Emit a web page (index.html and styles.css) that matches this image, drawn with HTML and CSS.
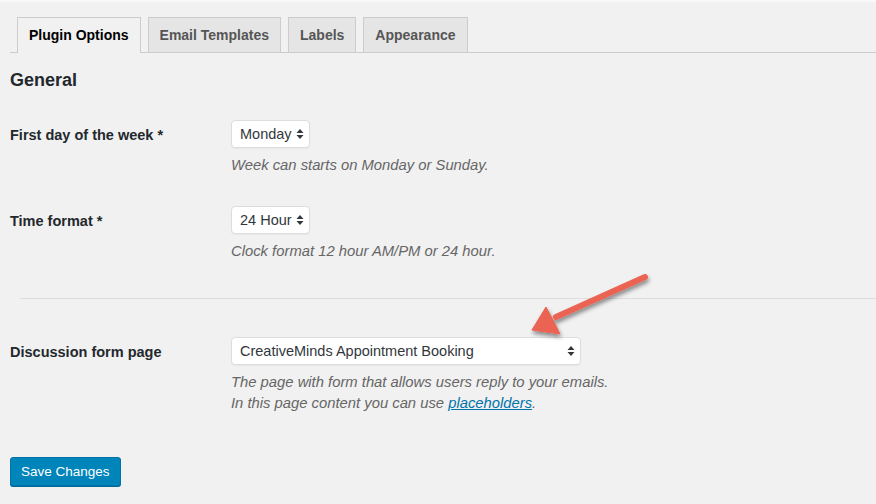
FILE: index.html
```html
<!DOCTYPE html>
<html lang="en">

<head>
    <meta charset="UTF-8">
    <title>Plugin Options</title>
    <link rel="stylesheet" href="styles.css">
</head>

<body>
    <div class="wrap">
        <!-- tabs -->
        <nav class="tabs">
            <a class="tab tab_active" href="#">Plugin Options</a>
            <a class="tab" href="#">Email Templates</a>
            <a class="tab" href="#">Labels</a>
            <a class="tab" href="#">Appearance</a>
        </nav>

        <h2 class="title">General</h2>

        <div class="row row_first">
            <div class="label">First day of the week *</div>
            <div class="field">
                <span class="select">Monday
                    <svg class="arrows" width="8" height="12" viewBox="0 0 8 12"><path d="M4 1 L7.5 5 H0.5 Z M4 11 L0.5 7 H7.5 Z" fill="#32373c"/></svg>
                </span>
                <p class="desc">Week can starts on Monday or Sunday.</p>
            </div>
        </div>

        <div class="row">
            <div class="label">Time format *</div>
            <div class="field">
                <span class="select">24 Hour
                    <svg class="arrows" width="8" height="12" viewBox="0 0 8 12"><path d="M4 1 L7.5 5 H0.5 Z M4 11 L0.5 7 H7.5 Z" fill="#32373c"/></svg>
                </span>
                <p class="desc">Clock format 12 hour AM/PM or 24 hour.</p>
            </div>
        </div>

        <hr class="sep">

        <div class="row row_after_sep">
            <div class="label">Discussion form page</div>
            <div class="field">
                <span class="select select_wide">CreativeMinds Appointment Booking
                    <svg class="arrows" width="8" height="12" viewBox="0 0 8 12"><path d="M4 1 L7.5 5 H0.5 Z M4 11 L0.5 7 H7.5 Z" fill="#32373c"/></svg>
                </span>
                <p class="desc">The page with form that allows users reply to your emails.<br>In this page content you can use <a href="#">placeholders</a>.</p>
            </div>
        </div>

        <button class="button_primary">Save Changes</button>
    </div>

    <!-- annotation arrow -->
    <svg class="callout" width="876" height="504" viewBox="0 0 876 504">
        <defs>
            <filter id="shade" x="-20%" y="-20%" width="140%" height="140%">
                <feGaussianBlur in="SourceAlpha" stdDeviation="2"/>
                <feOffset dx="1" dy="3"/>
                <feComponentTransfer><feFuncA type="linear" slope="0.45"/></feComponentTransfer>
                <feMerge><feMergeNode/><feMergeNode in="SourceGraphic"/></feMerge>
            </filter>
        </defs>
        <g filter="url(#shade)" fill="#ea6353" stroke="#ea6353">
            <line x1="645" y1="275" x2="556" y2="315" stroke-width="6" stroke-linecap="round"/>
            <path d="M532 328 L546 305 L553 318 L560 332 Z" stroke-width="1" stroke-linejoin="round"/>
        </g>
    </svg>
</body>

</html>
```

FILE: styles.css
```css
* {
    padding: 0;
    margin: 0;
    box-sizing: border-box;
}

body {
    background-color: #f1f1f1;
    border-top: 2px solid #f9f9f9;
    font-family: "Liberation Sans", Arial, sans-serif;
    font-size: 14px;
    color: #23282d;
    position: relative;
    width: 876px;
    height: 504px;
    overflow: hidden;
}

.wrap {
    padding: 15px 0 0 10px;
}

.tabs {
    display: flex;
    gap: 7px;
    padding-left: 7px;
    border-bottom: 1px solid #ccc;
    height: 36px;
}

.tab {
    display: block;
    height: 35px;
    padding: 5px 11px;
    border: 1px solid #ccc;
    border-bottom: none;
    background-color: #e5e5e5;
    color: #555;
    font-size: 14px;
    font-weight: bold;
    line-height: 24px;
    text-decoration: none;
}

.tab_active {
    background-color: #f1f1f1;
    color: #000;
    height: 36px;
}

.title {
    font-size: 18px;
    font-weight: bold;
    line-height: 24px;
    margin-top: 15px;
}

.row {
    display: grid;
    grid-template-columns: 221px 1fr;
    margin-top: 30px;
}

.row_first {
    margin-top: 28px;
}

.row_after_sep {
    margin-top: 38px;
}

.label {
    font-weight: bold;
    font-size: 14.5px;
    line-height: 18px;
    padding-top: 6px;
}

.select {
    display: inline-flex;
    align-items: center;
    gap: 4px;
    height: 28px;
    padding: 0 5px 0 8px;
    background-color: #fff;
    border: 1px solid #ddd;
    border-radius: 4px;
    box-shadow: 0 1px 1px rgba(0, 0, 0, 0.04);
    font-size: 14.5px;
    color: #32373c;
}

.select_wide {
    width: 350px;
    justify-content: space-between;
}

.desc {
    margin-top: 7px;
    font-style: italic;
    font-size: 14.8px;
    line-height: 21px;
    color: #666;
}

.desc a {
    color: #0073aa;
}

.sep {
    border: none;
    border-top: 1px solid #ddd;
    margin: 36px 0 0 10px;
}

.button_primary {
    display: block;
    margin-top: 43px;
    height: 29px;
    padding: 0 10px;
    background-color: #0085ba;
    border: 1px solid #0073aa;
    border-radius: 3px;
    box-shadow: 0 1px 0 #006799;
    color: #fff;
    font-family: "Liberation Sans", Arial, sans-serif;
    font-size: 13.5px;
    line-height: 26px;
}

.callout {
    position: absolute;
    left: 0;
    top: 0;
    pointer-events: none;
}
```
